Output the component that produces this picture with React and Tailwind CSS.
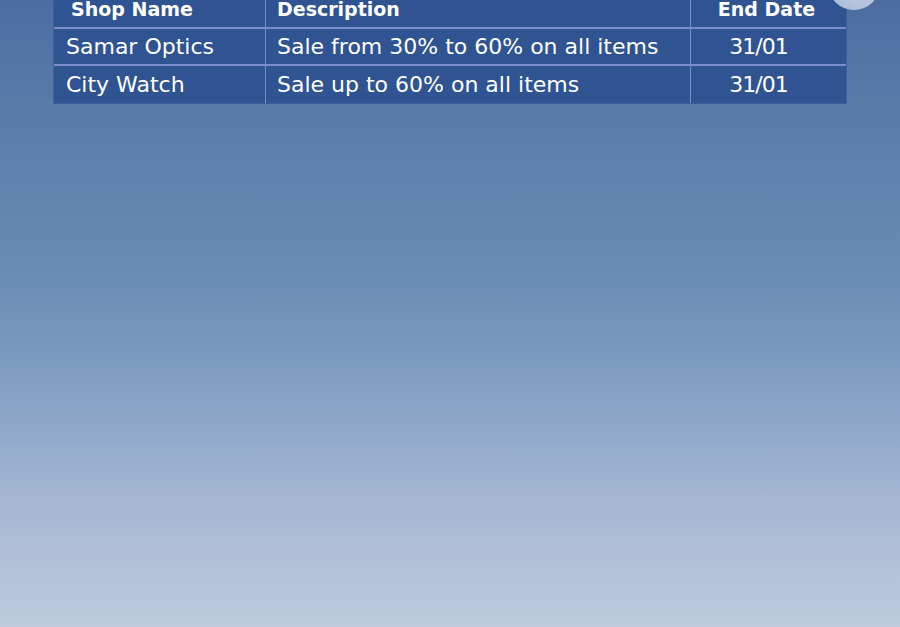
const rows = [
  { shop: 'Samar Optics', desc: 'Sale from 30% to 60% on all items', end: '31/01' },
  { shop: 'City Watch', desc: 'Sale up to 60% on all items', end: '31/01' },
]

export default function App() {
  return (
    <div
      className="relative w-[900px] h-[627px] overflow-hidden bg-[linear-gradient(to_bottom,#4d6da2_0%,#5b7daa_20%,#6b8cb5_45%,#84a0c4_62%,#a4b7d2_80%,#bdcbdd_100%)]"
      style={{ fontFamily: '"DejaVu Sans", "Open Sans", sans-serif' }}
    >
      <div className="absolute left-[828px] top-[-42px] w-[52px] h-[52px] rounded-full bg-[radial-gradient(circle_at_70%_30%,#d4dcec,#a3b3d3)] z-10" />

      <div className="ml-[53px] mt-[-10px] w-[794px] bg-[#2f5491] border border-[#3f5f98]">
        <div className="grid grid-cols-[212px_425px_1fr] h-[38px] border-b-2 border-[#7d8ccc] text-white font-bold text-[19px]">
          <div className="flex items-end pb-[4px] pl-[17px] border-r border-[#7d8ccc]">Shop Name</div>
          <div className="flex items-end pb-[4px] pl-[11px] border-r border-[#7d8ccc]">Description</div>
          <div className="flex items-end justify-center pb-[4px] pr-[4px]">End Date</div>
        </div>
        {rows.map((r, i) => (
          <div
            key={r.shop}
            className={`grid grid-cols-[212px_425px_1fr] h-[37px] text-white text-[22px] ${i === 0 ? 'border-b-2 border-[#7d8ccc]' : ''}`}
          >
            <div className="flex items-center pl-[12px] border-r border-[#7d8ccc]">{r.shop}</div>
            <div className="flex items-center pl-[11px] border-r border-[#7d8ccc]">{r.desc}</div>
            <div className="flex items-center justify-center pr-[20px] tracking-[-1px]">{r.end}</div>
          </div>
        ))}
      </div>
    </div>
  )
}
